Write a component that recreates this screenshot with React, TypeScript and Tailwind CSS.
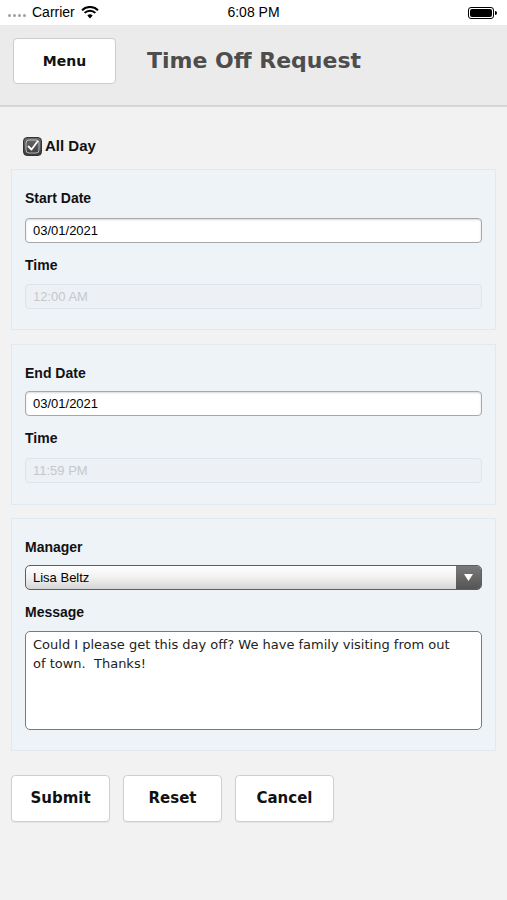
import { useState } from 'react';

const verdana = { fontFamily: '"DejaVu Sans", Verdana, sans-serif' };

function StatusBar() {
  return (
    <div className="h-[25px] bg-white flex items-center px-[8px] text-[14px] text-black relative" style={{ fontFamily: '"Liberation Sans", Arial, sans-serif' }}>
      <div className="flex items-center gap-[2px] mr-[6px]">
        {[0, 1, 2, 3].map((i) => (
          <span key={i} className="w-[3px] h-[3px] rounded-full bg-gray-400 mt-[6px]" />
        ))}
      </div>
      <span>Carrier</span>
      <svg width="18" height="13" viewBox="0 0 18 13" className="ml-[6px]">
        <path d="M9 12.5 L6.3 9.6 A4 4 0 0 1 11.7 9.6 Z" fill="black" />
        <path d="M3.6 6.9 A7.6 7.6 0 0 1 14.4 6.9" stroke="black" strokeWidth="2" fill="none" />
        <path d="M1 4.2 A11.4 11.4 0 0 1 17 4.2" stroke="black" strokeWidth="2" fill="none" />
      </svg>
      <span className="absolute left-1/2 -translate-x-1/2">6:08 PM</span>
      <div className="ml-auto flex items-center mr-[2px]">
        <div className="w-[26px] h-[12px] rounded-[3px] border border-black p-[1px]">
          <div className="w-full h-full rounded-[2px] bg-black" />
        </div>
        <div className="w-[2px] h-[4px] bg-black rounded-r-sm ml-[1px]" />
      </div>
    </div>
  );
}

function Label({ children, className = '' }: { children: React.ReactNode; className?: string }) {
  return <div className={`h-[16px] leading-[16px] text-[14px] font-bold text-[#111] ${className}`}>{children}</div>;
}

function TextInput({ value, disabled, className = '' }: { value: string; disabled?: boolean; className?: string }) {
  return (
    <div
      className={`h-[25px] rounded-[4px] flex items-center px-[7px] text-[13px] ${
        disabled
          ? 'bg-[#edf1f5] border border-[#dfe4ea] text-[#c4c8cc]'
          : 'bg-white border border-[#a8a8a8] shadow-[inset_0_1px_2px_rgba(0,0,0,0.15)] text-black'
      } ${className}`}
    >
      {value}
    </div>
  );
}

function Panel({ children, className = '' }: { children: React.ReactNode; className?: string }) {
  return (
    <div className={`mx-[11px] bg-[#eef3f8] border border-[#e2e8ef] px-[13px] pt-[20px] ${className}`}>{children}</div>
  );
}

function Btn({ label }: { label: string }) {
  return (
    <button
      className="w-[99px] h-[47px] bg-white border border-[#cfcfcf] rounded-[4px] text-[15px] font-bold text-[#111] shadow-[0_1px_1px_rgba(0,0,0,0.06)]"
      style={verdana}
    >
      {label}
    </button>
  );
}

export default function App() {
  const [allDay, setAllDay] = useState(true);

  return (
    <div className="w-[507px] h-[900px] bg-[#f2f2f2] overflow-hidden" style={{ fontFamily: '"Liberation Sans", Arial, sans-serif' }}>
      <StatusBar />

      {/* Header */}
      <div className="h-[82px] bg-[#ebebeb] border-b-2 border-[#d6d6d6] flex items-start pl-[13px] pt-[13px]">
        <button
          className="w-[103px] h-[46px] bg-white border border-[#cccccc] rounded-[4px] text-[14px] font-bold text-[#111]"
          style={verdana}
        >
          Menu
        </button>
        <h1 className="ml-[31px] mt-[9px] text-[22px] font-bold text-[#4d4d4d] leading-[28px]" style={verdana}>
          Time Off Request
        </h1>
      </div>

      {/* All day */}
      <label className="flex items-center ml-[23px] mt-[30px] h-[18px] cursor-pointer" onClick={() => setAllDay(!allDay)}>
        <span className="w-[19px] h-[19px] rounded-[4px] bg-gradient-to-b from-[#6a6a6a] to-[#3c3c3c] border border-[#333] flex items-center justify-center">
          {allDay && (
            <svg width="15" height="15" viewBox="0 0 15 15">
              <rect x="1" y="1" width="13" height="13" rx="3" fill="none" stroke="white" strokeWidth="1" opacity="0.6" />
              <path d="M3.5 7.5 L6.5 10.5 L12.5 2.5" fill="none" stroke="white" strokeWidth="1.8" strokeLinecap="round" strokeLinejoin="round" />
            </svg>
          )}
        </span>
        <span className="ml-[3px] text-[15px] font-bold text-[#111]">All Day</span>
      </label>

      <div className="mt-[14px] flex flex-col gap-[14px]">
        <Panel className="pb-[20px]">
          <Label>Start Date</Label>
          <TextInput value="03/01/2021" className="mt-[12px]" />
          <Label className="mt-[14px]">Time</Label>
          <TextInput value="12:00 AM" disabled className="mt-[11px]" />
        </Panel>

        <Panel className="pb-[21px]">
          <Label>End Date</Label>
          <TextInput value="03/01/2021" className="mt-[10px]" />
          <Label className="mt-[14px]">Time</Label>
          <TextInput value="11:59 PM" disabled className="mt-[12px]" />
        </Panel>

        <Panel className="pb-[20px] -mt-[1px]">
          <Label>Manager</Label>
          <div className="mt-[10px] h-[25px] rounded-[5px] border border-[#5e5e5e] bg-gradient-to-b from-white via-[#f1f1f1] to-[#d6d6d6] flex items-center overflow-hidden">
            <span className="flex-1 pl-[7px] text-[13px] text-black">Lisa Beltz</span>
            <span className="w-[25px] h-full bg-gradient-to-b from-[#7a7a7a] to-[#555] flex items-center justify-center">
              <svg width="9" height="7" viewBox="0 0 9 7">
                <path d="M0 0 H9 L4.5 7 Z" fill="white" />
              </svg>
            </span>
          </div>
          <Label className="mt-[14px]">Message</Label>
          <div
            className="mt-[11px] h-[99px] rounded-[5px] border border-[#7a7a7a] bg-white px-[7px] pt-[3px] text-[13px] leading-[19px] text-[#222]"
            style={verdana}
          >
            Could I please get this day off? We have family visiting from out
            <br />
            of town.&nbsp; Thanks!
          </div>
        </Panel>
      </div>

      <div className="flex gap-[13px] ml-[11px] mt-[24px]">
        <Btn label="Submit" />
        <Btn label="Reset" />
        <Btn label="Cancel" />
      </div>
    </div>
  );
}
